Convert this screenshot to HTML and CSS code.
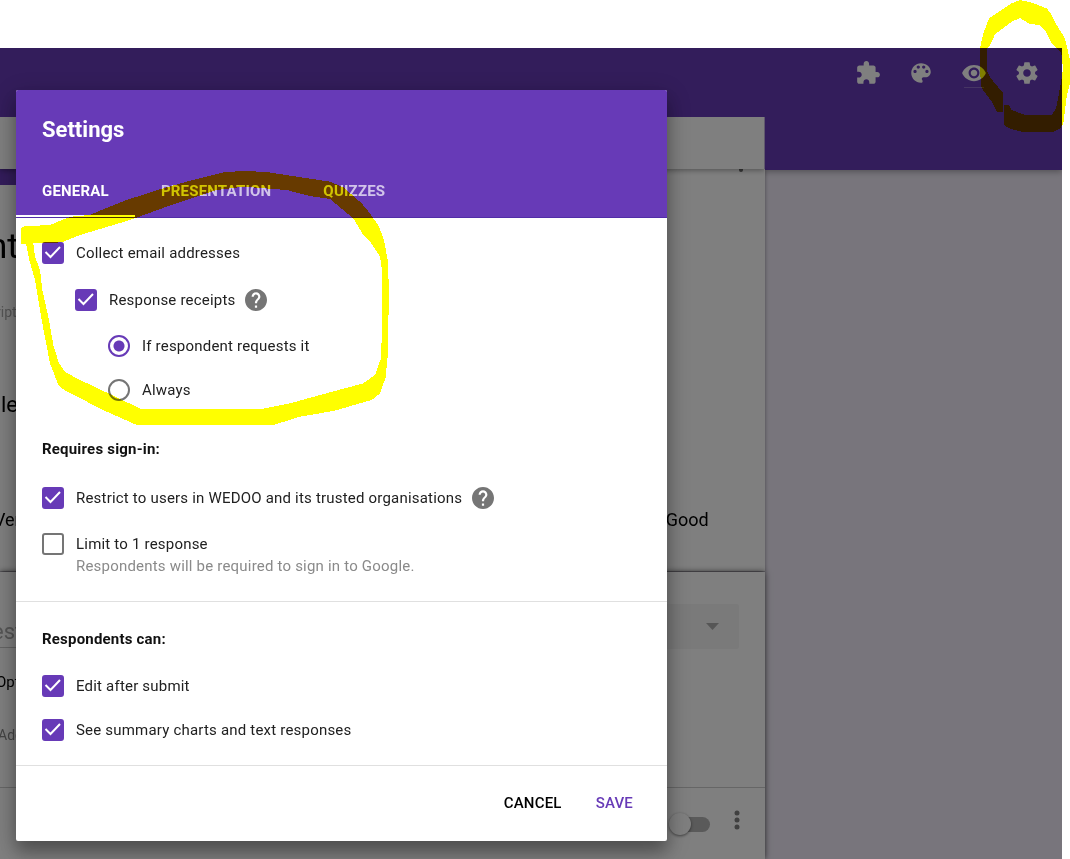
FILE: index.html
```html
<!DOCTYPE html>
<html lang="en">
<head>
<meta charset="utf-8">
<title>Settings</title>
<link rel="stylesheet" href="styles.css">
</head>
<body>
<div class="stage">
  <header class="topbar">
    <button class="icon-btn" aria-label="Add-ons"><svg viewBox="0 0 24 24"><path d="M20.500 11H19V7c0-1.100-.9-2-2-2h-4V3.500C13 2.120 11.880 1 10.500 1S8 2.120 8 3.500V5H4c-1.100 0-1.990.9-1.990 2v3.800H3.500c1.490 0 2.700 1.210 2.700 2.700s-1.210 2.700-2.700 2.700H2V20c0 1.100.9 2 2 2h3.800v-1.500c0-1.490 1.210-2.700 2.700-2.700 1.490 0 2.700 1.210 2.700 2.700V22H17c1.100 0 2-.9 2-2v-4h1.500c1.380 0 2.500-1.120 2.500-2.500S21.880 11 20.500 11z"/></svg></button>
    <button class="icon-btn" aria-label="Theme"><svg viewBox="0 0 24 24"><path d="M12 3c-4.970 0-9 4.030-9 9s4.030 9 9 9c.83 0 1.500-.67 1.500-1.500 0-.39-.15-.74-.39-1.010-.23-.26-.38-.61-.38-.99 0-.83.67-1.500 1.500-1.500H16c2.760 0 5-2.240 5-5 0-4.420-4.030-8-9-8zm-5.500 9c-.83 0-1.500-.67-1.500-1.500S5.670 9 6.500 9 8 9.670 8 10.500 7.330 12 6.500 12zm3-4C8.670 8 8 7.330 8 6.500S8.670 5 9.500 5s1.500.67 1.500 1.500S10.330 8 9.500 8zm5 0c-.83 0-1.500-.67-1.500-1.500S13.670 5 14.500 5s1.500.67 1.500 1.500S15.330 8 14.500 8zm3 4c-.83 0-1.500-.67-1.500-1.500S16.670 9 17.500 9s1.500.67 1.500 1.500-.67 1.500-1.500 1.500z"/></svg></button>
    <button class="icon-btn preview" aria-label="Preview"><svg viewBox="0 0 24 24"><path d="M12 4.500C7 4.500 2.730 7.610 1 12c1.730 4.390 6 7.500 11 7.500s9.270-3.110 11-7.500c-1.730-4.390-6-7.500-11-7.500zM12 17c-2.760 0-5-2.240-5-5s2.240-5 5-5 5 2.240 5 5-2.240 5-5 5zm0-8c-1.660 0-3 1.340-3 3s1.340 3 3 3 3-1.340 3-3-1.340-3-3-3z"/></svg></button>
    <button class="icon-btn" aria-label="Settings"><svg viewBox="0 0 24 24"><path d="M19.430 12.980c.04-.32.07-.64.07-.98s-.03-.66-.07-.98l2.110-1.650c.19-.15.24-.42.12-.64l-2-3.460c-.12-.22-.39-.3-.61-.22l-2.490 1c-.52-.4-1.080-.73-1.690-.98l-.38-2.650C14.460 2.180 14.250 2 14 2h-4c-.25 0-.46.18-.49.42l-.38 2.650c-.61.25-1.170.59-1.690.98l-2.490-1c-.23-.09-.49 0-.61.22l-2 3.460c-.13.22-.07.49.12.64l2.110 1.650c-.04.32-.07.65-.07.98s.03.66.07.98l-2.110 1.650c-.19.15-.24.42-.12.64l2 3.460c.12.22.39.3.61.22l2.490-1c.52.4 1.080.73 1.690.98l.38 2.650c.03.24.24.42.49.42h4c.25 0 .46-.18.49-.42l.38-2.650c.61-.25 1.170-.59 1.690-.98l2.490 1c.23.09.49 0 .61-.22l2-3.460c.12-.22.07-.49-.12-.64l-2.110-1.650zM12 15.500c-1.930 0-3.500-1.570-3.500-3.500s1.570-3.500 3.500-3.500 3.500 1.570 3.500 3.500-1.570 3.500-3.500 3.500z"/></svg></button>
  </header>

  <main class="form">
    <div class="form-tabs"></div>
    <section class="intro">
      <div class="intro-top"><span class="section-tab"></span><span class="section-menu"></span></div>
      <h2 class="form-title">nt</h2>
      <p class="form-desc">ript</p>
      <p class="question">le</p>
      <p class="scale"><span>Ver</span><span>Good</span></p>
    </section>
    <section class="editor">
      <div class="editor-head">
        <span class="editor-title">est</span>
        <select class="type" aria-label="Question type"><option></option></select>
      </div>
      <p class="option">Opt</p>
      <p class="option muted">Add</p>
      <div class="editor-foot">
        <input class="switch" type="checkbox" aria-label="Required">
        <button class="more" aria-label="More options"><svg viewBox="0 0 6 20"><circle cx="3" cy="3" r="2.500"/><circle cx="3" cy="10" r="2.500"/><circle cx="3" cy="17" r="2.500"/></svg></button>
      </div>
    </section>
  </main>

  <div class="scrim">
    <form class="dialog" role="dialog" aria-labelledby="dialog-title">
      <div class="dialog-head">
        <h1 class="dialog-title" id="dialog-title">Settings</h1>
        <div class="tabs" role="tablist">
          <button type="button" class="tab active" role="tab" aria-selected="true">GENERAL</button>
          <button type="button" class="tab" role="tab">PRESENTATION</button>
          <button type="button" class="tab" role="tab">QUIZZES</button>
        </div>
      </div>
      <div class="group">
        <div class="row"><input type="checkbox" id="collect" checked><label for="collect">Collect email addresses</label></div>
        <div class="row level-1"><input type="checkbox" id="receipts" checked><label for="receipts">Response receipts</label>
          <button type="button" class="help" aria-label="Help"><svg viewBox="2 2 20 20"><path d="M12 2C6.480 2 2 6.480 2 12s4.480 10 10 10 10-4.480 10-10S17.520 2 12 2zm1 17h-2v-2h2v2zm2.070-7.750l-.9.920C13.450 12.900 13 13.500 13 15h-2v-.5c0-1.100.45-2.100 1.170-2.830l1.240-1.260c.37-.36.59-.86.59-1.410 0-1.100-.9-2-2-2s-2 .9-2 2H8c0-2.210 1.790-4 4-4s4 1.790 4 4c0 .88-.36 1.680-.93 2.250z"/></svg></button></div>
        <div class="row level-2"><input type="radio" name="receipt" id="request" checked><label for="request">If respondent requests it</label></div>
        <div class="row level-2 tight"><input type="radio" name="receipt" id="always"><label for="always">Always</label></div>
        <h2 class="heading spaced">Requires sign-in:</h2>
        <div class="row"><input type="checkbox" id="restrict" checked><label for="restrict">Restrict to users in WEDOO and its trusted organisations</label>
          <button type="button" class="help" aria-label="Help"><svg viewBox="2 2 20 20"><path d="M12 2C6.480 2 2 6.480 2 12s4.480 10 10 10 10-4.480 10-10S17.520 2 12 2zm1 17h-2v-2h2v2zm2.070-7.750l-.9.920C13.450 12.900 13 13.500 13 15h-2v-.5c0-1.100.45-2.100 1.170-2.830l1.240-1.260c.37-.36.59-.86.59-1.410 0-1.100-.9-2-2-2s-2 .9-2 2H8c0-2.210 1.790-4 4-4s4 1.790 4 4c0 .88-.36 1.680-.93 2.250z"/></svg></button></div>
        <div class="row"><input type="checkbox" id="limit" aria-describedby="limit-note"><label for="limit">Limit to 1 response</label></div>
        <p class="note" id="limit-note">Respondents will be required to sign in to Google.</p>
      </div>
      <div class="group">
        <h2 class="heading">Respondents can:</h2>
        <div class="row"><input type="checkbox" id="edit" checked><label for="edit">Edit after submit</label></div>
        <div class="row tight"><input type="checkbox" id="summary" checked><label for="summary">See summary charts and text responses</label></div>
      </div>
      <div class="actions">
        <button type="button" class="action">CANCEL</button>
        <button type="button" class="action primary">SAVE</button>
      </div>
    </form>
  </div>
</div>

<svg class="marker" width="1070" height="859" viewBox="0 0 3210 2577" shape-rendering="crispEdges" aria-hidden="true">
  <path fill-rule="evenodd" d="M64 684L75 678H92L150 675L190 658L215 650L270 645L305 630L380 600L480 568L560 545L640 525L675 516L735 513L800 516L870 527L990 545L1030 562L1085 610L1110 640L1137 680L1152 720L1163 780L1167 870L1163 1070L1157 1132L1140 1180L1115 1200L1000 1233L900 1250L820 1275H410L320 1235L195 1172L175 1155L150 1090L125 960L105 840L88 780L78 732H64ZM100 730L105 770L120 810L127 870L145 950L160 1035L177 1090L195 1115L230 1135L325 1180L425 1228H780L870 1210L960 1185L1090 1150L1125 1125L1143 1075L1147 950V820L1140 770L1110 725L1090 705L1060 655L990 597L930 588L860 570L730 560L650 570L560 600L500 620L390 660L240 705L190 725L160 730Z"/>
  <path d="M2940 144L2950 100L2967 55L3035 10L3060 0L3095 8L3140 25L3155 45L3170 75L3195 115L3210 180V250L3200 290L3190 370L3180 385L3160 395H3065L3030 386L3012 375V316H3028L3035 330L3075 345H3155L3168 325L3175 290L3184 240L3189 205L3184 160L3155 130L3138 95L3120 75L3090 72L3060 54L3035 65L2985 103L2970 135L2962 144V215L2970 232L3010 280V335H2990L2975 305L2945 265L2940 215Z"/>
</svg>
</body>
</html>
```

FILE: styles.css
```css
* { box-sizing: border-box; }

body {
  margin: 0;
  min-height: 100vh;
  padding: 48px 8px 0 0;
  display: flex;
  flex-direction: column;
  position: relative;
  overflow: hidden;
  background: #fff;
  font-family: Roboto, "Liberation Sans", sans-serif;
  color: #000;
}

h1, h2, p { margin: 0; font-weight: 400; }
button { border: 0; padding: 0; background: none; font: inherit; letter-spacing: inherit; color: inherit; cursor: pointer; }
button svg { display: block; width: 100%; height: 100%; fill: currentColor; }

.stage {
  flex: 1;
  display: flex;
  flex-direction: column;
  position: relative;
  overflow: hidden;
  background: #f0ebf8;
}

/* Application bar */
.topbar {
  display: flex;
  justify-content: flex-end;
  align-items: flex-start;
  gap: 27px;
  height: 122px;
  padding: 12px 22px 0;
  background: #673ab7;
  color: #fff;
  box-shadow: 0 2px 6px rgba(0, 0, 0, .3);
}
.icon-btn { width: 26px; height: 26px; }
.preview { height: 28px; padding: 0 0 2px; }
.preview::after {
  content: "";
  display: block;
  height: 1px;
  margin: 1px 3px 0;
  background: rgba(255, 255, 255, .25);
}

/* Form editor behind the dialog */
.form {
  flex: 1;
  display: flex;
  flex-direction: column;
  position: relative;
  width: 72%;
  margin-top: -53px;
}
.form-tabs {
  position: relative;
  height: 52px;
  background: #fff;
  box-shadow: 0 1px 6px rgba(0, 0, 0, .4);
  clip-path: inset(0 0 -10px 0);
}
.intro { padding-bottom: 39px; background: #fff; box-shadow: 0 1px 4px rgba(0, 0, 0, .4); }
.intro-top { display: flex; justify-content: space-between; padding-right: 22px; }
.section-tab { width: 160px; height: 16px; background: #673ab7; }
.section-menu { width: 4px; height: 3px; background: #707070; border-radius: 0 0 2px 2px; }
.form-title { margin: 42px 0 0 -12px; font-size: 35px; line-height: 40px; }
.form-desc { margin: 35px 0 0 -4px; font-size: 14px; line-height: 20px; color: #aaa; }
.question { margin: 71px 0 0 1px; font-size: 22px; line-height: 24px; }
.scale {
  display: flex;
  justify-content: space-between;
  margin: 91px 0 0 -6px;
  padding-right: 56px;
  font-size: 18px;
  line-height: 24px;
}
.editor {
  flex: 1;
  position: relative;
  margin-top: 1px;
  padding-top: 32px;
  background: #fff;
  box-shadow: 0 0 6px rgba(0, 0, 0, .7);
}
.editor-head { display: flex; justify-content: space-between; padding-right: 26px; }
.editor-title {
  width: 50%;
  height: 44px;
  margin-left: -8px;
  border-bottom: 1px solid #c8c8c8;
  font-size: 22px;
  line-height: 56px;
  color: #aaa;
}
.type {
  width: 240px;
  height: 45px;
  border: 0;
  border-radius: 3px;
  appearance: none;
  background: #f4f4f4 url("data:image/svg+xml,%3Csvg xmlns='http://www.w3.org/2000/svg' width='13' height='7'%3E%3Cpath d='M0 0h13L6.500 7z' fill='%23acacac'/%3E%3C/svg%3E") no-repeat right 20px center;
}
.option { margin: 23px 0 0 -4px; font-size: 15px; line-height: 20px; }
.option.muted { margin-top: 33px; margin-left: -2px; font-size: 14px; color: #8a8a8a; }
.editor-foot {
  display: flex;
  justify-content: flex-end;
  align-items: flex-start;
  gap: 24px;
  margin-top: 42px;
  padding: 22px 25px 0;
  border-top: 1px solid #ccc;
}
.switch {
  appearance: none;
  width: 36px;
  height: 15px;
  margin: 7px 0 0;
  border-radius: 8px;
  background: #b4b4b4;
}
.switch::before {
  content: "";
  display: block;
  width: 22px;
  height: 22px;
  margin: -4px 0 0 -5px;
  border-radius: 50%;
  background: #fff;
  box-shadow: 0 1px 3px rgba(0, 0, 0, .5);
}
.more { width: 6px; height: 20px; color: #808080; }

/* Dialog */
.scrim {
  position: absolute;
  inset: 0;
  padding: 42px 16px 18px;
  background: rgba(0, 0, 0, .5);
}
.dialog {
  max-width: 651px;
  border-radius: 2px;
  background: #fff;
  box-shadow: 0 12px 16px rgba(0, 0, 0, .24), 0 6px 24px rgba(0, 0, 0, .24);
  letter-spacing: .2px;
}
.dialog-head {
  padding-top: 26px;
  background: #673ab7;
  color: #fff;
  border-bottom: 1px solid #512da8;
  border-radius: 2px 2px 0 0;
}
.dialog-title { padding: 0 26px; font-size: 22px; font-weight: 700; line-height: 28px; letter-spacing: normal; }
.tabs { display: flex; margin-top: 20px; }
.tab {
  height: 53px;
  padding: 2px 26px 0;
  border-bottom: 2px solid transparent;
  font-size: 15px;
  font-weight: 700;
  line-height: 18px;
  color: rgba(255, 255, 255, .7);
}
.tab.active { border-bottom-color: #fff; color: #fff; }

.group { padding: 0 26px 24px; border-bottom: 1px solid #e0e0e0; }
.row {
  display: flex;
  align-items: center;
  gap: 12px;
  height: 22px;
  margin-top: 24px;
  font-size: 15px;
  line-height: 22px;
  color: #212121;
}
.row.tight { margin-top: 22px; }
.row.level-1 { margin-top: 25px; padding-left: 33px; }
.level-2 { padding-left: 66px; }
.heading {
  padding-top: 26px;
  font-size: 15px;
  font-weight: 700;
  line-height: 22px;
  color: #111;
}
.heading.spaced { padding-top: 37px; }
.heading + .row { margin-top: 25px; }
.heading.spaced + .row { margin-top: 27px; }
.note { padding-left: 34px; font-size: 15px; line-height: 22px; color: #8a8a8a; }
.help { width: 22px; height: 22px; margin-left: -2px; color: #757575; }

.row input {
  appearance: none;
  flex: none;
  width: 22px;
  height: 22px;
  margin: 0;
  border: 2px solid #757575;
}
.row input[type="checkbox"] { border-radius: 3px; }
.row input[type="checkbox"]:checked {
  border-color: #673ab7;
  background: #673ab7 url("data:image/svg+xml,%3Csvg xmlns='http://www.w3.org/2000/svg' width='22' height='22'%3E%3Cpath d='M3.500 10l5 5 9.500-10' fill='none' stroke='%23fff' stroke-width='2'/%3E%3C/svg%3E") center no-repeat;
}
.row input[type="radio"] { border-radius: 50%; }
.row input[type="radio"]:checked {
  border-color: #673ab7;
  background: radial-gradient(circle, #673ab7 5px, transparent 6px);
}

.actions { display: flex; justify-content: flex-end; align-items: center; gap: 34px; height: 75px; padding: 0 34px 2px; }
.action { font-size: 15px; font-weight: 500; line-height: 20px; }
.action.primary { color: #673ab7; }

/* Highlighter strokes drawn over the window */
.marker {
  position: absolute;
  top: 0;
  left: 0;
  fill: #ff0;
  mix-blend-mode: multiply;
  pointer-events: none;
}
```
